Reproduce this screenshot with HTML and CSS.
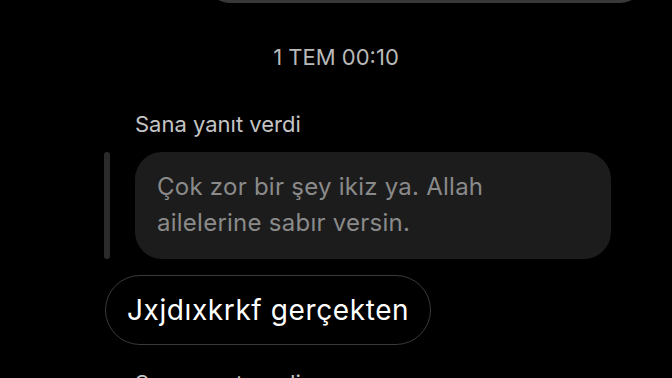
FILE: index.html
```html
<!DOCTYPE html>
<html>
<head>
<meta charset="utf-8">
<link rel="stylesheet" href="styles.css">
</head>
<body>
<div class="chat">
  <div class="prev-bubble"></div>
  <div class="stamp">1 TEM 00:10</div>
  <div class="reply-label">Sana yanıt verdi</div>
  <div class="quote-row">
    <div class="quote-bar"></div>
    <div class="quote">Çok zor bir şey ikiz ya. Allah ailelerine sabır versin.</div>
  </div>
  <div class="msg-row">
    <div class="msg">Jxjdıxkrkf gerçekten</div>
  </div>
  <div class="reply-label next">Sana yanıt verdi</div>
</div>
</body>
</html>
```
FILE: styles.css
```css
html, body {
  margin: 0;
  padding: 0;
  background: #000;
  height: 378px;
  overflow: hidden;
}
.chat {
  width: 672px;
  font-family: Inter, Roboto, "Noto Sans", sans-serif;
  display: flex;
  flex-direction: column;
}
.prev-bubble {
  margin-top: -40px;
  margin-left: 208px;
  width: 434px;
  height: 43px;
  border-radius: 30px;
  background: #383838;
}
.stamp {
  margin-top: 41px;
  text-align: center;
  color: #b9b9b9;
  font-size: 22px;
  line-height: 26px;
}
.reply-label {
  margin-top: 42px;
  padding-left: 135px;
  color: #c4c4c4;
  font-size: 22px;
  line-height: 24px;
}
.quote-row {
  margin-top: 16px;
  display: flex;
  gap: 25px;
  padding-left: 104px;
}
.quote-bar {
  width: 6px;
  border-radius: 3px;
  background: #2a2a2a;
}
.quote {
  width: 432px;
  padding: 17px 22px 18px 22px;
  border-radius: 27px;
  background: #1c1c1c;
  color: #8a8a8a;
  font-size: 24px;
  letter-spacing: 0.25px;
  line-height: 36px;
}
.msg-row {
  margin-top: 16px;
  padding-left: 105px;
  display: flex;
}
.msg {
  height: 68px;
  padding: 0 21px;
  border: 1px solid #3a3a3a;
  border-radius: 35px;
  color: #fff;
  font-size: 28px;
  letter-spacing: 0.6px;
  line-height: 68px;
}
.reply-label.next {
  margin-top: 26px;
}
```
